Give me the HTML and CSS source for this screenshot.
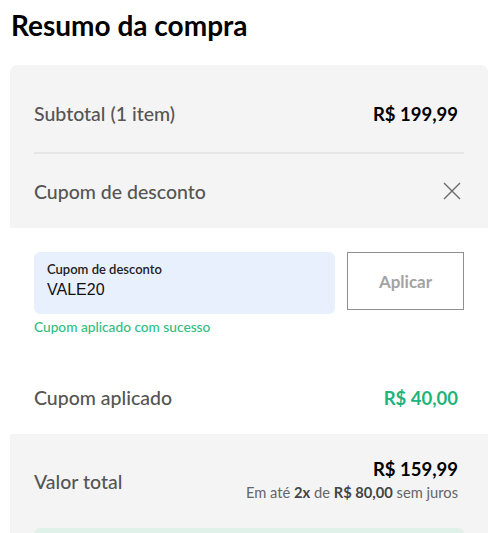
FILE: index.html
```html
<!DOCTYPE html>
<html lang="pt-BR">
<head>
    <meta charset="UTF-8">
    <meta name="viewport" content="width=device-width, initial-scale=1.0">
    <title>Resumo da compra</title>
    <link rel="stylesheet" href="styles.css">
</head>
<body>
    <h1 class="title">Resumo da compra</h1>
    <div class="summary">
        <div class="summary-row subtotal">
            <span class="label">Subtotal (1 item)</span>
            <span class="amount">R$ 199,99</span>
        </div>
        <div class="coupon-head">
            <span class="label">Cupom de desconto</span>
            <svg class="close" width="18" height="18" viewBox="0 0 18 18">
                <path d="M1 1L17 17M17 1L1 17" stroke="#6b6b6b" stroke-width="1.4" fill="none"/>
            </svg>
        </div>
        <div class="coupon-body">
            <div class="coupon-form">
                <div class="field">
                    <label for="coupon">Cupom de desconto</label>
                    <input type="text" id="coupon" value="VALE20">
                </div>
                <button type="button" class="apply">Aplicar</button>
            </div>
            <p class="success">Cupom aplicado com sucesso</p>
            <div class="summary-row applied">
                <span class="label">Cupom aplicado</span>
                <span class="amount green">R$ 40,00</span>
            </div>
        </div>
        <div class="summary-row total">
            <span class="label">Valor total</span>
            <div class="total-value">
                <span class="amount">R$ 159,99</span>
                <span class="installments">Em até <strong>2x</strong> de <strong>R$ 80,00</strong> sem juros</span>
            </div>
        </div>
        <div class="notice"></div>
    </div>
</body>
</html>
```

FILE: styles.css
```css
body {
    margin: 0;
    padding: 0 12px 0 10px;
    font-family: 'Lato', 'Open Sans', sans-serif;
    background: white;
    color: #222;
}
.title {
    margin: 0;
    padding: 7px 0 0 1px;
    height: 65px;
    box-sizing: border-box;
    font-size: 28px;
    line-height: 36px;
    font-weight: 700;
    color: #000;
}
.summary {
    background-color: #f4f4f4;
    border-radius: 7px 7px 0 0;
    overflow: hidden;
}
.summary-row {
    display: flex;
    justify-content: space-between;
    align-items: center;
    margin: 0 24px;
}
.label {
    font-size: 19.5px;
    font-weight: 500;
    color: #555;
}
.amount {
    font-size: 18.5px;
    font-weight: 700;
    color: #000;
    padding-right: 6px;
}
.amount.green {
    color: #1eb47a;
}
.subtotal {
    padding: 36px 0 25px;
    line-height: 26px;
    border-bottom: 2px solid #e6e6e6;
}
.coupon-head {
    display: flex;
    justify-content: space-between;
    align-items: center;
    height: 74px;
    margin: 0 24px;
    padding-right: 3px;
}
.close {
    display: block;
}
.coupon-body {
    display: flex;
    flex-direction: column;
    background: white;
    padding: 24px 24px 0;
    height: 206px;
    box-sizing: border-box;
}
.coupon-form {
    display: flex;
    gap: 12px;
    align-items: flex-start;
}
.field {
    flex: 1;
    height: 62px;
    box-sizing: border-box;
    background: #e8f0fe;
    border-radius: 6px;
    padding: 9px 13px 0;
}
.field label {
    display: block;
    font-size: 13px;
    line-height: 16px;
    font-weight: 600;
    color: #222;
}
.field input {
    display: block;
    width: 100%;
    border: none;
    background: transparent;
    padding: 0;
    margin-top: 2px;
    font-family: 'Liberation Sans', Arial, sans-serif;
    font-size: 16px;
    line-height: 22px;
    color: #111;
    outline: none;
}
.apply {
    width: 117px;
    height: 58px;
    background: white;
    border: 1px solid #8f8f8f;
    border-radius: 0;
    font-family: 'Lato', sans-serif;
    font-size: 17px;
    font-weight: 700;
    color: #a3a3a3;
    cursor: pointer;
}
.success {
    margin: 5px 0 0;
    font-size: 13.7px;
    line-height: 16px;
    font-weight: 500;
    color: #2fbd83;
}
.applied {
    margin: auto 0 0;
    padding-bottom: 23px;
    line-height: 26px;
}
.total {
    height: 94px;
    padding-top: 0;
    box-sizing: border-box;
}
.total-value {
    display: flex;
    flex-direction: column;
    align-items: flex-end;
    padding-right: 6px;
}
.total-value .amount {
    padding-right: 0;
    line-height: 22px;
}
.installments {
    font-size: 14.7px;
    line-height: 24px;
    color: #666;
}
.installments strong {
    color: #444;
}
.notice {
    margin: 0 24px;
    height: 40px;
    background: #e0f1ea;
    border-radius: 6px;
}
```
